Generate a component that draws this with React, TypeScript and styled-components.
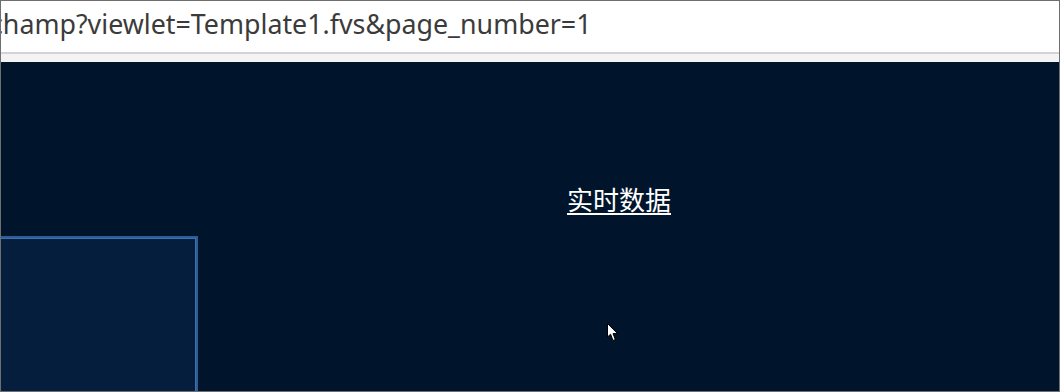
import React from "react";
import styled, {createGlobalStyle} from "styled-components";

const GlobalStyle = createGlobalStyle`
  html, body {
    margin: 0;
    padding: 0;
    background: #ffffff;
  }
  * {
    box-sizing: border-box;
  }
`;

const Frame = styled.div`
  position: relative;
  display: flex;
  flex-direction: column;
  width: 1060px;
  height: 392px;
  border: 1px solid #6e6e6e;
  overflow: hidden;
`;

const AddressBar = styled.div`
  display: flex;
  align-items: center;
  height: 53px;
  background: #ffffff;
  border-bottom: 2px solid #d3d3d3;
  overflow: hidden;
`;

// the start of the url is scrolled out of view, as in the browser bar
const UrlText = styled.span`
  margin-left: -11px;
  padding-bottom: 7px;
  white-space: nowrap;
  font-family: "Noto Sans", "Open Sans", sans-serif;
  font-size: 26.8px;
  letter-spacing: 0;
  color: #3b3b3b;
`;

const Strip = styled.div`
  height: 8px;
  background: #f3f3f3;
`;

const Stage = styled.div`
  flex: 1;
  display: flex;
  flex-direction: column;
  align-items: flex-start;
  background: #00142b;
  padding-top: 122px;
`;

const Title = styled.a`
  margin-left: 566px;
  font-family: "Noto Sans CJK SC", "Noto Sans", sans-serif;
  font-size: 26px;
  line-height: 30px;
  color: #ffffff;
  text-decoration: underline;
  text-underline-offset: 3px;
  text-decoration-thickness: 2px;
  cursor: pointer;
`;

const Panel = styled.div`
  margin-top: 22px;
  width: 197px;
  flex: 1;
  background: #051e3d;
  border-top: 2px solid #2c5d96;
  border-right: 2px solid #2c5d96;
  box-shadow: inset -1px 1px 0 #3d70ad;
`;

const Pointer = styled.svg`
  position: absolute;
  left: 606px;
  top: 322px;
`;

const App: React.FC = () => {
  return (
    <>
      <GlobalStyle />
      <Frame>
        <AddressBar>
          <UrlText>champ?viewlet=Template1.fvs&amp;page_number=1</UrlText>
        </AddressBar>
        <Strip />
        <Stage>
          <Title>实时数据</Title>
          <Panel />
        </Stage>
        <Pointer width="12" height="19" viewBox="0 0 12 19">
          <path
            d="M0.5 0.5 L0.5 14 L3.6 11.2 L6 17.5 L8.3 16.5 L6 10.6 L10.5 10.6 Z"
            fill="#ffffff"
            stroke="#000000"
            strokeWidth="1"
            strokeLinejoin="miter"
          />
        </Pointer>
      </Frame>
    </>
  );
};

export default App;
